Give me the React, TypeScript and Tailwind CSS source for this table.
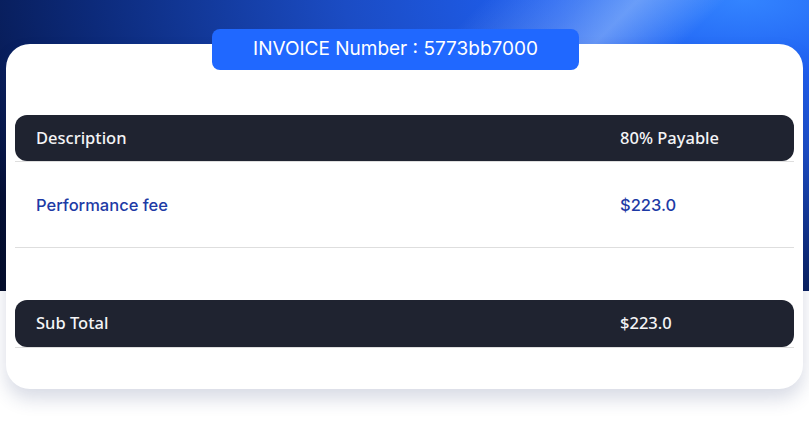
const rows = [{ description: "Performance fee", amount: "$223.0" }];

const App = () => {
  return (
    <main className="min-h-screen w-full bg-white bg-no-repeat bg-[length:100%_291px] bg-[linear-gradient(135deg,transparent_44%,rgba(150,185,245,0.35)_53%,rgba(160,195,250,0.55)_58%,transparent_66%),radial-gradient(ellipse_at_92%_0%,#3384ff_0%,#1f60f2_18%,#1b4cc4_38%,#0c2a7a_62%,#030d31_85%,#020a26_100%)] px-[6px] pt-[29px] pb-10">
      <div className="relative z-10 ml-[206px] flex h-[41px] w-[367px] items-center justify-center rounded-lg bg-[#2068ff] font-['Inter',sans-serif] text-[19px] text-white">
        INVOICE Number : 5773bb7000
      </div>

      <div className="-mt-[26px] h-[345px] w-[797px] rounded-[24px] bg-white px-[9px] pt-[71px] shadow-[0_10px_18px_rgba(40,55,110,0.18)]">
        <div className="border-b border-[#dedede]">
          <div className="grid h-[46px] grid-cols-[390px_193px_1fr] items-center rounded-xl bg-[#1f2330] font-['Noto_Sans',sans-serif] text-[16.5px] font-medium text-[#f4f4f6]">
            <div className="pl-[21px]">Description</div>
            <div />
            <div className="pl-[22px]">80% Payable</div>
          </div>
        </div>

        {rows.map((row, index) => (
          <div
            key={index}
            className="grid h-[86px] grid-cols-[390px_193px_1fr] items-center border-b border-[#dedede] pt-[2px] font-['Inter',sans-serif] text-[16.5px] font-medium text-[#1d3aa5]"
          >
            <div className="pl-[21px]">{row.description}</div>
            <div />
            <div className="pl-[22px]">{row.amount}</div>
          </div>
        ))}

        <div className="mt-[52px] border-b border-[#dedede]">
          <div className="grid h-[47px] grid-cols-[390px_193px_1fr] items-center rounded-xl bg-[#1f2330] font-['Noto_Sans',sans-serif] text-[16.5px] font-medium text-[#f4f4f6]">
            <div className="pl-[21px]">Sub Total</div>
            <div />
            <div className="pl-[22px]">$223.0</div>
          </div>
        </div>
      </div>
    </main>
  );
};

export default App;
